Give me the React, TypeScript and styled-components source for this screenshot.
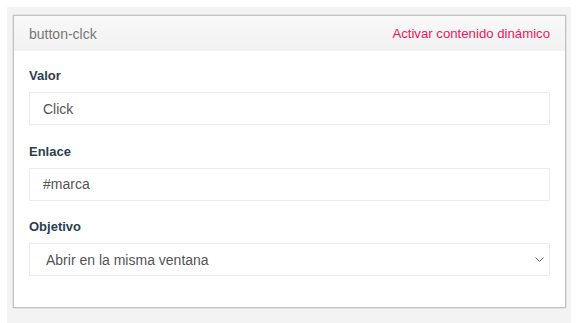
import styled, { createGlobalStyle } from 'styled-components';

const GlobalStyle = createGlobalStyle`
  html, body {
    margin: 0;
    padding: 0;
    background: #fff;
  }
  body {
    font-family: "Liberation Sans", Arial, sans-serif;
  }
`;

const Page = styled.div`
  padding: 7px 7px 0 7px;
  height: 323px;
  box-sizing: border-box;
`;

const Backdrop = styled.div`
  background: #f3f3f3;
  height: 100%;
  width: 564px;
  padding: 8px 5px 0 6px;
  box-sizing: border-box;
`;

const Panel = styled.div`
  background: #fff;
  border: 1px solid #c2c2c2;
  box-shadow: 0 0 0 0.5px #d6d6d6;
`;

const Header = styled.div`
  display: flex;
  justify-content: space-between;
  align-items: center;
  height: 35px;
  padding: 0 15px;
  background: linear-gradient(#f8f8f8, #f2f2f2);
  font-size: 14px;
`;

const Title = styled.span`
  color: #777;
`;

const Toggle = styled.a`
  color: #e8185c;
  font-size: 13.2px;
  text-decoration: none;
  cursor: pointer;
`;

const Body = styled.div`
  padding: 16px 15px 31px;
  display: flex;
  flex-direction: column;
  gap: 17.5px;
`;

const Field = styled.div`
  display: flex;
  flex-direction: column;
  gap: 7px;
`;

const Label = styled.label`
  font-size: 13px;
  font-weight: bold;
  line-height: 18px;
  color: #2c3e50;
`;

const Box = styled.div<{ $indent?: number }>`
  height: 33px;
  box-sizing: border-box;
  border: 1px solid #ececec;
  display: flex;
  align-items: center;
  justify-content: space-between;
  padding: 0 5px 0 ${(p) => p.$indent ?? 13}px;
  font-size: 14px;
  color: #555;
`;

const Chevron = () => (
  <svg width="9" height="5" viewBox="0 0 9 5">
    <path d="M0.5 0.5l4 4 4-4" fill="none" stroke="#666" strokeWidth="1" />
  </svg>
);

export default function App() {
  return (
    <>
      <GlobalStyle />
      <Page>
        <Backdrop>
          <Panel>
            <Header>
              <Title>button-clck</Title>
              <Toggle>Activar contenido dinámico</Toggle>
            </Header>
            <Body>
              <Field>
                <Label>Valor</Label>
                <Box>Click</Box>
              </Field>
              <Field>
                <Label>Enlace</Label>
                <Box>#marca</Box>
              </Field>
              <Field>
                <Label>Objetivo</Label>
                <Box $indent={16}>
                  Abrir en la misma ventana
                  <Chevron />
                </Box>
              </Field>
            </Body>
          </Panel>
        </Backdrop>
      </Page>
    </>
  );
}
